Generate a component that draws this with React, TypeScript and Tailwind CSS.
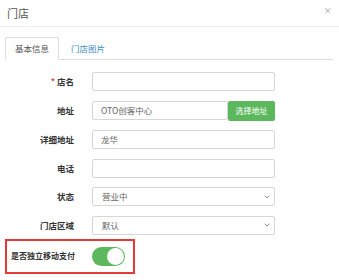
import { ChevronDown } from 'lucide-react'

const font = { fontFamily: '"Noto Sans CJK SC", "Noto Sans", sans-serif' }

function Label({ children, required }: { children: React.ReactNode; required?: boolean }) {
  return (
    <div className="w-[69px] shrink-0 text-right text-[8.5px] font-bold text-[#333] leading-none">
      {required && <span className="text-[#e53935] mr-[2px]">*</span>}
      {children}
    </div>
  )
}

function TextBox({ value, w = 'w-[183px]' }: { value?: string; w?: string }) {
  return (
    <div className={`${w} h-[19px] ml-[18px] border border-[#d6d6d6] rounded-[2px] flex items-center px-[8px] text-[8.5px] text-[#666]`}>
      {value}
    </div>
  )
}

function SelectBox({ value }: { value: string }) {
  return (
    <div className="w-[183px] h-[19px] ml-[18px] border border-[#d6d6d6] rounded-[2px] flex items-center justify-between pl-[9px] pr-[3px] text-[8.5px] text-[#666]">
      <span>{value}</span>
      <ChevronDown size={8} strokeWidth={2.5} className="text-[#777]" />
    </div>
  )
}

export default function App() {
  return (
    <div className="w-[339px] h-[280px] bg-white overflow-hidden" style={font}>
      {/* header */}
      <div className="h-[27px] border-b border-[#eee] flex items-center justify-between pl-[7px] pr-[7px]">
        <span className="text-[11px] text-[#555]">门店</span>
        <span className="text-[9px] text-[#bbb] -mt-[5px]">✕</span>
      </div>

      <div className="pl-[5px] pt-[10px]">
        {/* tabs */}
        <div className="w-[328px] h-[23px] flex border-b border-[#ddd]">
          <div className="w-[54px] h-[23px] border border-[#ddd] border-b-white rounded-t-[2px] bg-white flex items-center justify-center text-[8.5px] text-[#555]">
            基本信息
          </div>
          <div className="h-[23px] flex items-center pl-[12px] text-[8.5px] text-[#3a8cc4]">门店图片</div>
        </div>

        {/* form */}
        <div className="mt-[12px] flex flex-col gap-[9.5px]">
          <div className="flex items-center">
            <Label required>店名</Label>
            <TextBox />
          </div>
          <div className="flex items-center">
            <Label>地址</Label>
            <TextBox value="OTO创客中心" w="w-[136px]" />
            <div className="w-[47px] h-[20px] bg-[#5cb85c] rounded-[2px] flex items-center justify-center text-[8px] text-white">
              选择地址
            </div>
          </div>
          <div className="flex items-center">
            <Label>详细地址</Label>
            <TextBox value="龙华" />
          </div>
          <div className="flex items-center">
            <Label>电话</Label>
            <TextBox />
          </div>
          <div className="flex items-center">
            <Label>状态</Label>
            <SelectBox value="营业中" />
          </div>
          <div className="flex items-center">
            <Label>门店区域</Label>
            <SelectBox value="默认" />
          </div>
        </div>

        {/* highlighted toggle row */}
        <div className="mt-[4px] w-[130px] h-[35px] border-2 border-[#e53935] flex items-center pl-[4px]">
          <span className="text-[8px] font-bold text-[#333] w-[81px]">是否独立移动支付</span>
          <div className="w-[33px] h-[19px] rounded-full bg-[#5cb85c] flex items-center justify-end pr-[1px]">
            <div className="w-[17px] h-[17px] rounded-full bg-white" />
          </div>
        </div>
      </div>

      <div className="mt-[6px] border-t border-[#e5e5e5]" />
    </div>
  )
}
